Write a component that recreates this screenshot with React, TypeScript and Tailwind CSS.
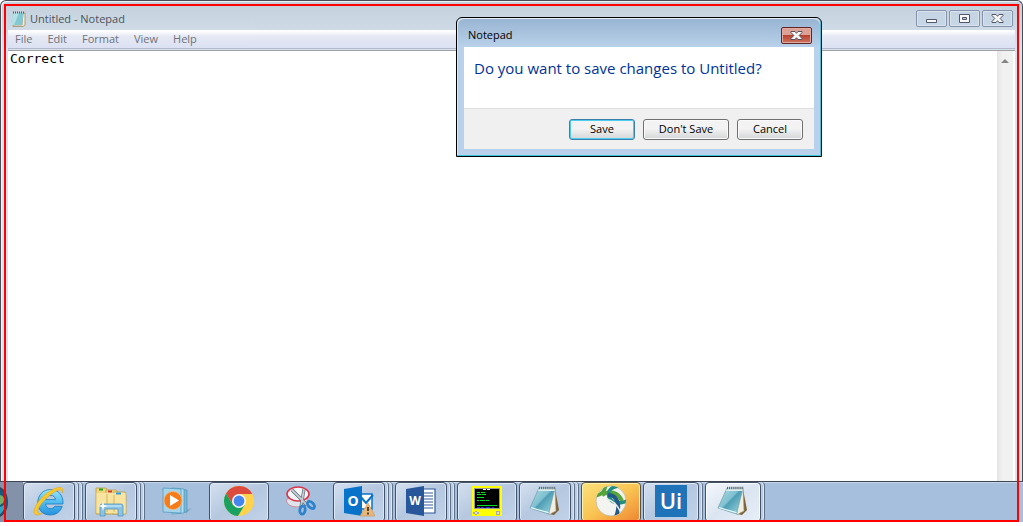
import type { ReactNode } from "react";

const menus = ["File", "Edit", "Format", "View", "Help"];

function NotepadIcon({ className }: { className: string }) {
  return (
    <svg viewBox="0 0 32 32" className={className} aria-hidden="true">
      <defs>
        <linearGradient id="page" x1="0" y1="0" x2="1" y2="1">
          <stop offset="0" stopColor="#b4dfe8" />
          <stop offset=".45" stopColor="#7fc0d0" />
          <stop offset=".5" stopColor="#4f9db4" />
          <stop offset="1" stopColor="#a5dfe8" />
        </linearGradient>
      </defs>
      <path d="m26 4 4 21-5 5-5-1Z" fill="#7d6238" />
      <path d="m26 4 1 22-4 2-3 2-1-20Z" fill="#f1efe2" stroke="#9b9a8a" strokeWidth=".6" />
      <path d="M10 3H26L19.500 29 1 23Z" fill="url(#page)" stroke="#6f9ca8" strokeWidth=".7" />
      <path d="M10 3.500H26L25.500 6H9Z" fill="#dcebed" />
      <path d="M10 3H27" stroke="#5e6264" strokeWidth="2.400" strokeDasharray="1 1.100" />
      <path d="m2 22.700 17.500 5" stroke="#e6f7f8" strokeWidth="1.200" />
    </svg>
  );
}

function SmallNotepadIcon() {
  return (
    <svg viewBox="0 0 16 16" className="size-4" aria-hidden="true">
      <path d="M13 2h2v12l-2 1.500H3V14h9Z" fill="#f4efdb" stroke="#9c8c68" strokeWidth=".8" />
      <path d="M3 2h10.500L12 14H.7Z" fill="#83c9d3" />
      <path d="M3 2h6L4 14H.7Z" fill="#b4e0e6" />
      <path d="M3 1.500h11" stroke="#535e62" strokeWidth="2" strokeDasharray="1 1" />
    </svg>
  );
}

function IeIcon() {
  return (
    <svg viewBox="0 0 32 32" className="size-8" aria-hidden="true">
      <defs>
        <linearGradient id="ie" x1="0" y1="0" x2="0" y2="1">
          <stop offset="0" stopColor="#9ee4fa" />
          <stop offset=".5" stopColor="#51bdf0" />
          <stop offset="1" stopColor="#2491dc" />
        </linearGradient>
      </defs>
      <path
        d="M30 19H12.500c.5 3 2.400 4.600 5 4.600 2 0 3.400-.8 4.200-2.300h7.500C27.500 26.500 23.500 30 17.200 30 9.500 30 4.800 24.700 4.800 17.500S10 4.500 17.500 4.500 30 10 30 17.500Zm-7.400-4.400c-.4-2.600-2.200-4.200-4.900-4.200-2.800 0-4.600 1.600-5.200 4.200Z"
        fill="url(#ie)" stroke="#1878bd" strokeWidth=".8"
      />
      <path
        d="M29.500 8C31 4 29 1.500 25 2.500 18 4.200 9.500 10.500 4.800 17.500 0 24.500 0 30 4 30c1.700 0 3.600-.6 5.500-1.700-3.200.8-5.200.2-4.600-2.600.9-4.200 5.400-10 11-14.600C21.300 6.500 26.500 4 28.300 5c.8.500 1 1.500 1.200 3Z"
        fill="#f9c62b" stroke="#dfa313" strokeWidth=".5"
      />
    </svg>
  );
}

function ExplorerIcon() {
  return (
    <svg viewBox="0 0 32 32" className="size-8" aria-hidden="true">
      <path d="M1 3h10l2 3v23H1Z" fill="#f0d77b" stroke="#bd9b43" strokeWidth=".8" />
      <path d="M11 5h10l2 3v21H11Z" fill="#f4df91" stroke="#bd9b43" strokeWidth=".8" />
      <path d="M18 7h12l1 3v19H18Z" fill="#f8e8a8" stroke="#bd9b43" strokeWidth=".8" />
      <path d="M1.500 8H30.500V28H1.500Z" fill="#f7e4a0" />
      <path d="M12 9v18M19 10v17" stroke="#d5b65c" strokeWidth="1" />
      <path d="M4 3.500h4v2H4Z" fill="#20a429" />
      <path d="M13 5.500h4v2h-4Z" fill="#d93829" />
      <path d="M21 7.500h5v2h-5Z" fill="#329dd6" />
      <path d="M5 31V21q0-2 2-2h19q2 0 2 2v10h-5v-7H10v7Z" fill="#8bc4e2" stroke="#5796bd" strokeWidth=".8" />
      <path d="M6.500 21h20" stroke="#d7f3ff" />
      <path d="m8 16 1 4 4 1-4 1-1 4-1-4-4-1 4-1Z" fill="white" />
    </svg>
  );
}

function MediaIcon() {
  return (
    <svg viewBox="0 0 32 32" className="size-8" aria-hidden="true">
      <path d="m25 25 6-2-6 5Z" fill="#8ba4bd" />
      <path d="m14 4 12 1v22l-12 1Z" fill="#78b7d8" stroke="#4a93bb" strokeWidth=".7" />
      <path d="m11 3 12 1v24l-12 1Z" fill="#b2dced" stroke="#4a93bb" strokeWidth=".7" />
      <path d="m2 3 18 1v24L2 27Z" fill="#a4d5ea" stroke="#4a93bb" strokeWidth=".7" />
      <circle cx="12" cy="15.500" r="9" fill="#f57c18" stroke="#f8b477" strokeWidth=".8" />
      <path d="m9 10 9 5.500L9 21Z" fill="white" />
    </svg>
  );
}

function ChromeIcon() {
  return (
    <svg viewBox="0 0 32 32" className="size-8" aria-hidden="true">
      <circle cx="16" cy="16" r="15" fill="#ffd24c" />
      <path d="M16 9h13.300A15 15 0 0 0 3 8.500L10 20Z" fill="#dc4b3e" />
      <path d="M3 8.500A15 15 0 0 0 15 31l7-11.500L10 20Z" fill="#18a160" />
      <circle cx="16" cy="16" r="7" fill="#f4f5f4" />
      <circle cx="16" cy="16" r="5.400" fill="#4386ef" />
    </svg>
  );
}

function SnippingIcon() {
  return (
    <svg viewBox="0 0 32 32" className="size-8" aria-hidden="true">
      <ellipse cx="12" cy="16" rx="10.500" ry="6" fill="#dfe4ec" stroke="#cf8d9b" strokeWidth="1" />
      <ellipse cx="13" cy="9" rx="11" ry="7" fill="#f4f7fa" stroke="#dc344a" strokeWidth="1.600" />
      <path d="m7 5 15 15M19 4l-3 18" fill="none" stroke="#5f6a74" strokeWidth="3.200" />
      <path d="m7 5 15 15M19 4l-3 18" fill="none" stroke="#c3ccd4" strokeWidth="1.800" />
      <ellipse cx="17.500" cy="25" rx="2.600" ry="4.200" transform="rotate(10 17.500 25)" fill="none" stroke="#2c83cb" strokeWidth="2.800" />
      <ellipse cx="26" cy="20" rx="2.600" ry="4.200" transform="rotate(-45 26 20)" fill="none" stroke="#2c83cb" strokeWidth="2.800" />
    </svg>
  );
}

function OutlookIcon() {
  return (
    <svg viewBox="0 0 32 32" className="size-8" aria-hidden="true">
      <path d="M14 9h15v15H14Z" fill="white" stroke="#0873c9" strokeWidth="1.500" />
      <path d="m17 11 6 7 7-8" fill="none" stroke="#0873c9" strokeWidth="2" />
      <path d="M1 4 19 1v30L1 28Z" fill="#0873c9" />
      <text x="10" y="21" textAnchor="middle" fontFamily="Open Sans, sans-serif" fontWeight="700" fontSize="14" fill="white">O</text>
      <path d="m25 18 7 13H17Z" fill="#e7b77b" stroke="#cc9a5b" strokeWidth=".7" />
      <path d="M25 22v4m0 1.500v2" stroke="#5d4326" strokeWidth="2" />
    </svg>
  );
}

function WordIcon() {
  return (
    <svg viewBox="0 0 32 32" className="size-8" aria-hidden="true">
      <path d="M15 4h15v24H15Z" fill="white" stroke="#315a9f" strokeWidth="1.200" />
      <path d="M18 8h10M18 11h10M18 14h10M18 17h10M18 20h10M18 23h10" stroke="#315a9f" strokeWidth="1.200" />
      <path d="M1 4 19 1v30L1 28Z" fill="#28569b" />
      <text x="10" y="20" textAnchor="middle" fontFamily="Open Sans, sans-serif" fontWeight="700" fontSize="12" fill="white">W</text>
    </svg>
  );
}

function TerminalIcon() {
  return (
    <svg viewBox="0 0 32 32" className="size-8" shapeRendering="crispEdges" aria-hidden="true">
      <path d="M1 1h30v30H1Z" fill="#ff0" />
      <path d="M3 3h26v21H3Z" fill="#999" />
      <path d="M4 4h24v19H4Z" fill="black" />
      <path d="M12 4h3v1h-3Zm4 0h3v1h-3Z" fill="white" />
      <path d="M6 7h3v1H6Zm4 0h4v1h-4ZM6 9h4v1H6Zm5 0h4v1h-4ZM6 12h7v1H6ZM9 15h5v1H9Zm6 0h3v1h-3ZM6 15h2v1H6ZM6 20h20v1H6Z" fill="#00e020" />
      <path d="M6 22h3v1H6Zm4 0h3v1h-3Zm5 0h4v1h-4Zm6 0h2v1h-2Z" fill="#22f" />
      <path d="M4 26h2v1H4Zm-2 1h6v2H2Zm2 2h2v1H4Zm21-3h4v4h-4Z" fill="#aaa" />
      <path d="M4 27h2v2H4Zm22 0h2v2h-2Z" fill="#ddd" />
    </svg>
  );
}

function ConnectIcon() {
  return (
    <svg viewBox="0 0 32 32" className="size-8" aria-hidden="true">
      <defs>
        <clipPath id="globe"><circle cx="16" cy="16" r="15" /></clipPath>
      </defs>
      <circle cx="16" cy="16" r="15" fill="#f3f4f0" stroke="#b4b8aa" strokeWidth=".7" />
      <g clipPath="url(#globe)" fill="none">
        <path d="M0 11C7 10 10 6 11 0" stroke="#55a03a" strokeWidth="3.500" />
        <path d="M7 10c7-5 16-3 20 6" stroke="#58a53a" strokeWidth="4" />
        <path d="M24 1c-9 1-12 6-10 11s9 8 18 4" stroke="#238e80" strokeWidth="3.500" />
        <path d="M13 10c9 0 13 9 8 22" stroke="#245886" strokeWidth="4" />
        <path d="M12 14c6 2 10 5 14 14" stroke="#e7eaec" strokeWidth="1.500" />
      </g>
    </svg>
  );
}

function UiPathIcon() {
  return (
    <svg viewBox="0 0 32 32" className="size-8" aria-hidden="true">
      <path d="M0 0h32v32H0Z" fill="#2173b9" />
      <text x="16" y="24" textAnchor="middle" fontFamily="Open Sans, sans-serif" fontWeight="600" fontSize="22" fill="white">Ui</text>
    </svg>
  );
}

type Task = { name: string; icon: ReactNode; state?: "idle" | "alert" | "active"; stack?: number };

const tasks: Task[] = [
  { name: "Internet Explorer", icon: <IeIcon />, stack: 2 },
  { name: "File Explorer", icon: <ExplorerIcon />, stack: 2 },
  { name: "Media Player", icon: <MediaIcon />, state: "idle" },
  { name: "Chrome", icon: <ChromeIcon /> },
  { name: "Snipping Tool", icon: <SnippingIcon />, state: "idle" },
  { name: "Outlook", icon: <OutlookIcon />, stack: 2 },
  { name: "Word", icon: <WordIcon />, stack: 2 },
  { name: "Terminal", icon: <TerminalIcon /> },
  { name: "Notepad", icon: <NotepadIcon className="size-8" />, stack: 2 },
  { name: "AnyConnect", icon: <ConnectIcon />, state: "alert" },
  { name: "UiPath", icon: <UiPathIcon />, stack: 1 },
  { name: "Notepad document", icon: <NotepadIcon className="size-8" />, state: "active", stack: 1 },
];

function TaskButton({ name, icon, state, stack = 0 }: Task) {
  const look =
    state === "idle"
      ? "border-transparent"
      : state === "alert"
        ? "border-[#5c5340] bg-linear-to-br from-[#fbe27c] via-[#f9c452] to-[#ee8432] shadow-[inset_0_0_0_1px_#fff0b0]"
        : state === "active"
          ? "border-[#44536a] bg-linear-to-br from-[#f5f8fc] via-[#dbe5f1] to-[#e7eff8] shadow-[inset_0_0_0_1px_#f8fbff]"
          : "border-[#44536a] bg-linear-to-br from-[#d5e0ef] via-[#b5c8e0] to-[#c2d3e9] shadow-[inset_0_0_0_1px_#dce8f5]";
  return (
    <div className="flex w-15 shrink-0">
      <button aria-label={name} className={`flex min-w-0 flex-1 items-center justify-center rounded-sm border pb-0.5 ${look}`}>
        {icon}
      </button>
      {Array.from({ length: stack }, (_, i) => (
        <span key={i} className="w-1 rounded-r-sm border-r border-[#5f7189] bg-[#bccde3] shadow-[inset_-1px_0_0_#dce8f5]" />
      ))}
    </div>
  );
}

function Caption({ label, children }: { label: string; children: ReactNode }) {
  return (
    <button aria-label={label} className="flex h-[17px] w-[31px] items-center justify-center rounded-xs border border-[#8592ac] bg-linear-to-b from-[#c5d3e2] to-[#c8d8e8] shadow-[inset_0_0_0_1px_#d9e4ef]">
      <svg viewBox="0 0 15 13" className="h-[13px] w-[15px]" aria-hidden="true">{children}</svg>
    </button>
  );
}

function CloseGlyph() {
  return (
    <>
      <path d="M2 2.500h4l1.500 1.800L9 2.500h4v1l-2.800 3 2.800 3v1H9L7.500 8.700 6 10.500H2v-1l2.800-3L2 3.500Z" fill="#f7f7f7" stroke="#505566" />
    </>
  );
}

function SaveDialog() {
  const button = "h-[21px] rounded-[3px] border bg-linear-to-b from-[#f3f3f3] from-45% to-[#d4d6d7] text-[11px] leading-4 text-black";
  return (
    <section role="dialog" aria-labelledby="dialog-title" className="absolute top-[17px] left-[456px] w-[366px] rounded-t-md border border-black bg-[#b9d1ea] px-[7px] pb-[7px] shadow-[inset_-1px_-1px_0_#39c6df,inset_1px_1px_0_#dce9f5]">
      <div className="-mx-1.5 flex h-[29px] items-center justify-between rounded-t-md bg-linear-to-b from-[#98b4d2] to-[#b9d1ea] pt-1.5 pr-2 pl-2.5 shadow-[inset_0_1px_0_#e4edf6]">
        <h2 id="dialog-title" className="text-[11px] text-black">Notepad</h2>
        <button aria-label="Close dialog" className="flex h-[17px] w-[31px] items-center justify-center rounded-xs border border-[#5d2729] bg-linear-to-b from-[#dda094] from-45% via-[#b84231] via-50% to-[#cf7460] shadow-[inset_0_0_0_1px_#e4aca0]">
          <svg viewBox="0 0 15 13" className="h-[13px] w-[15px]" aria-hidden="true"><CloseGlyph /></svg>
        </button>
      </div>
      <div className="bg-[#f0f0f0]">
        <p className="h-[62px] border-b border-[#dfdfdf] bg-white px-2.5 pt-[9px] text-[15px] leading-6 whitespace-nowrap text-[#003399]">Do you want to save changes to Untitled?</p>
        <div className="flex h-10 items-center justify-end gap-2 pr-[11px]">
          <button className={`${button} w-[66px] border-[#3b7fac] shadow-[inset_0_0_0_1px_#4bcdf0]`}>Save</button>
          <button className={`${button} w-[86px] border-[#707070] shadow-[inset_0_0_0_1px_#fafafa]`}>Don't Save</button>
          <button className={`${button} w-[66px] border-[#707070] shadow-[inset_0_0_0_1px_#fafafa]`}>Cancel</button>
        </div>
      </div>
    </section>
  );
}

export default function App() {
  return (
    <div className="relative flex h-screen flex-col overflow-hidden bg-white pb-1 font-['Open_Sans','Noto_Sans',sans-serif]">
      <main className="flex min-h-0 flex-1 flex-col rounded-t-md border border-b-0 border-[#4b4d54] bg-linear-to-b from-[#c3d0dc] to-[#d7e4f0] to-[50px] px-[7px] shadow-[inset_1px_1px_0_#edf3f8]">
        <header className="flex h-[29px] shrink-0 items-center justify-between pt-1.5">
          <div className="flex items-center gap-1 pt-px pl-0.5">
            <SmallNotepadIcon />
            <h1 className="text-[11px] text-[#4b525b]">Untitled - Notepad</h1>
          </div>
          <div className="flex gap-0.5 pr-0.5">
            <Caption label="Minimize"><path d="M2.500 7.500h10v3h-10Z" fill="#f8f8f8" stroke="#535969" /></Caption>
            <Caption label="Maximize"><path d="M2.500 2.500h10v8h-10Z" fill="#f8f8f8" stroke="#535969" /><path d="M5.500 5.500h4v2h-4Z" fill="#b9c8da" stroke="#535969" /></Caption>
            <Caption label="Close"><CloseGlyph /></Caption>
          </div>
        </header>
        <nav className="flex h-[19px] shrink-0 items-center gap-[15px] border-b border-[#b4bacb] bg-linear-to-b from-white from-5% via-[#e5e9f3] via-35% to-[#dce1f3] px-[7px] pt-px text-[11px] text-[#70727a]">
          {menus.map((menu) => <button key={menu}>{menu}</button>)}
        </nav>
        <div className="mt-px flex min-h-0 flex-1 border-t border-[#a0a0a0] bg-white">
          <textarea aria-label="Document text" defaultValue="Correct" spellCheck={false} className="min-w-0 flex-1 resize-none bg-white px-0.5 font-['DejaVu_Sans_Mono',monospace] text-[13px] leading-4 text-black outline-none" />
          <div className="mr-0.5 flex w-4 justify-center bg-linear-to-r from-[#e4e4e4] to-[#f1f1f1] to-35% pt-2">
            <svg viewBox="0 0 8 4" className="h-1 w-2" aria-hidden="true"><path d="m4 0 4 4H0Z" fill="#858585" /></svg>
          </div>
        </div>
      </main>
      <nav aria-label="Taskbar" className="flex h-[41px] shrink-0 border-t border-[#3c4551] bg-[#a6bfdc] shadow-[inset_0_1px_0_#c7d7e9]">
        <button aria-label="Start" className="flex w-[23px] shrink-0 items-center bg-[#8392a9]">
          <svg viewBox="0 0 8 30" className="h-[30px] w-2" aria-hidden="true">
            <path d="M0 0c5 2 8 8 8 15S5 28 0 30Z" fill="#35495c" />
            <path d="M0 2c4 3 7 7 7 13s-3 10-7 13Z" fill="#145a7c" />
            <path d="M0 20c2 0 5-3 6-5-1 6-3 10-6 12Z" fill="#2fa6c4" />
            <path d="M0 8c4 1 5 4 3 8l-3 2Z" fill="#6fae6a" />
          </svg>
        </button>
        <div className="flex gap-0.5">{tasks.map((task) => <TaskButton key={task.name} {...task} />)}</div>
      </nav>
      <SaveDialog />
      <div className="pointer-events-none absolute inset-1 border-2 border-[#ff0000]" />
    </div>
  );
}
